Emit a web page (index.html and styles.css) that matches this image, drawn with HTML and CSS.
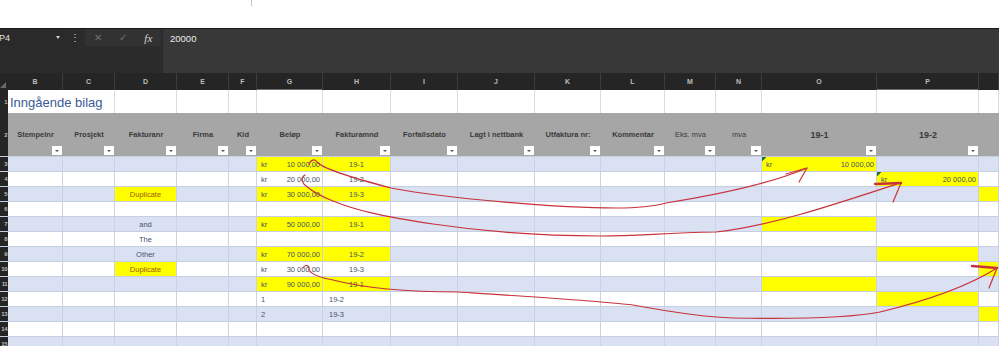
FILE: index.html
```html
<!DOCTYPE html>
<html lang="nb">
<head>
    <meta charset="UTF-8">
    <title>Inngående bilag</title>
    <link rel="stylesheet" href="styles.css">
</head>
<body>
<div class="page">
    <div class="topgap"><span class="tick"></span></div>

    <div class="fbar">
        <div class="fleft">
            <div class="ftools">
                <div class="namebox"><span>P4</span><span class="caret"></span></div>
                <div class="dots">&#8942;</div>
                <div class="fbtns">
                    <span class="fb x">&#10005;</span>
                    <span class="fb ok">&#10003;</span>
                    <span class="fb fx">fx</span>
                </div>
            </div>
        </div>
        <div class="formula">20000</div>
    </div>

    <div class="colheads">
        <div class="corner"><span class="corner-tri"></span></div>
        <div>B</div><div>C</div><div>D</div><div>E</div><div>F</div><div class="sel">G</div>
        <div>H</div><div>I</div><div>J</div><div>K</div><div>L</div><div>M</div><div>N</div>
        <div>O</div><div class="sel">P</div><div></div>
    </div>

    <div class="sheet">
        <div class="row title">
            <div class="rh">1</div>
            <div class="c ttl">Inngående bilag</div>
            <div class="c"></div><div class="c"></div><div class="c"></div><div class="c"></div><div class="c"></div>
            <div class="c"></div><div class="c"></div><div class="c"></div><div class="c"></div><div class="c"></div>
            <div class="c"></div><div class="c"></div><div class="c"></div><div class="c"></div>
        </div>

        <div class="row head">
            <div class="rh">2</div>
            <div class="h"><span>Stempelnr</span><i class="flt"></i></div>
            <div class="h"><span>Prosjekt</span><i class="flt"></i></div>
            <div class="h"><span>Fakturanr</span><i class="flt"></i></div>
            <div class="h"><span>Firma</span><i class="flt"></i></div>
            <div class="h"><span>Kid</span><i class="flt"></i></div>
            <div class="h"><span>Beløp</span><i class="flt"></i></div>
            <div class="h"><span>Fakturamnd</span><i class="flt"></i></div>
            <div class="h"><span>Forfallsdato</span><i class="flt"></i></div>
            <div class="h"><span>Lagt i nettbank</span><i class="flt"></i></div>
            <div class="h"><span>Utfaktura nr:</span><i class="flt"></i></div>
            <div class="h"><span>Kommentar</span><i class="flt"></i></div>
            <div class="h thin"><span>Eks. mva</span><i class="flt"></i></div>
            <div class="h thin"><span>mva</span><i class="flt"></i></div>
            <div class="h big"><span>19-1</span><i class="flt"></i></div>
            <div class="h big"><span>19-2</span><i class="flt"></i></div>
            <div class="h"></div>
        </div>

        <div class="row blue">
            <div class="rh">3</div>
            <div class="c"></div><div class="c"></div><div class="c"></div><div class="c"></div><div class="c"></div>
            <div class="c y m"><span>kr</span><span>10 000,00</span></div>
            <div class="c y ctr">19-1</div>
            <div class="c"></div><div class="c"></div><div class="c"></div><div class="c"></div><div class="c"></div><div class="c"></div>
            <div class="c y m flag"><span>kr</span><span>10 000,00</span></div>
            <div class="c"></div><div class="c"></div>
        </div>

        <div class="row">
            <div class="rh">4</div>
            <div class="c"></div><div class="c"></div><div class="c"></div><div class="c"></div><div class="c"></div>
            <div class="c m"><span>kr</span><span>20 000,00</span></div>
            <div class="c ctr">19-2</div>
            <div class="c"></div><div class="c"></div><div class="c"></div><div class="c"></div><div class="c"></div><div class="c"></div>
            <div class="c"></div>
            <div class="c y m flag"><span>kr</span><span>20 000,00</span></div>
            <div class="c"></div>
        </div>

        <div class="row blue">
            <div class="rh">5</div>
            <div class="c"></div><div class="c"></div>
            <div class="c y ctr dup">Duplicate</div>
            <div class="c"></div><div class="c"></div>
            <div class="c y m"><span>kr</span><span>30 000,00</span></div>
            <div class="c y ctr">19-3</div>
            <div class="c"></div><div class="c"></div><div class="c"></div><div class="c"></div><div class="c"></div><div class="c"></div>
            <div class="c"></div><div class="c"></div>
            <div class="c y"></div>
        </div>

        <div class="row">
            <div class="rh">6</div>
            <div class="c"></div><div class="c"></div><div class="c"></div><div class="c"></div><div class="c"></div>
            <div class="c"></div><div class="c"></div><div class="c"></div><div class="c"></div><div class="c"></div>
            <div class="c"></div><div class="c"></div><div class="c"></div><div class="c"></div><div class="c"></div><div class="c"></div>
        </div>

        <div class="row blue">
            <div class="rh">7</div>
            <div class="c"></div><div class="c"></div>
            <div class="c ctr">and</div>
            <div class="c"></div><div class="c"></div>
            <div class="c y m"><span>kr</span><span>50 000,00</span></div>
            <div class="c y ctr">19-1</div>
            <div class="c"></div><div class="c"></div><div class="c"></div><div class="c"></div><div class="c"></div><div class="c"></div>
            <div class="c y"></div>
            <div class="c"></div><div class="c"></div>
        </div>

        <div class="row">
            <div class="rh">8</div>
            <div class="c"></div><div class="c"></div>
            <div class="c ctr">The</div>
            <div class="c"></div><div class="c"></div><div class="c"></div><div class="c"></div><div class="c"></div>
            <div class="c"></div><div class="c"></div><div class="c"></div><div class="c"></div><div class="c"></div>
            <div class="c"></div><div class="c"></div><div class="c"></div>
        </div>

        <div class="row blue">
            <div class="rh">9</div>
            <div class="c"></div><div class="c"></div>
            <div class="c ctr">Other</div>
            <div class="c"></div><div class="c"></div>
            <div class="c y m"><span>kr</span><span>70 000,00</span></div>
            <div class="c y ctr">19-2</div>
            <div class="c"></div><div class="c"></div><div class="c"></div><div class="c"></div><div class="c"></div><div class="c"></div>
            <div class="c"></div>
            <div class="c y"></div>
            <div class="c"></div>
        </div>

        <div class="row">
            <div class="rh">10</div>
            <div class="c"></div><div class="c"></div>
            <div class="c y ctr dup">Duplicate</div>
            <div class="c"></div><div class="c"></div>
            <div class="c m"><span>kr</span><span>30 000,00</span></div>
            <div class="c ctr">19-3</div>
            <div class="c"></div><div class="c"></div><div class="c"></div><div class="c"></div><div class="c"></div><div class="c"></div>
            <div class="c"></div><div class="c"></div>
            <div class="c y"></div>
        </div>

        <div class="row blue">
            <div class="rh">11</div>
            <div class="c"></div><div class="c"></div><div class="c"></div><div class="c"></div><div class="c"></div>
            <div class="c y m"><span>kr</span><span>90 000,00</span></div>
            <div class="c y ctr">19-1</div>
            <div class="c"></div><div class="c"></div><div class="c"></div><div class="c"></div><div class="c"></div><div class="c"></div>
            <div class="c y"></div>
            <div class="c"></div><div class="c"></div>
        </div>

        <div class="row">
            <div class="rh">12</div>
            <div class="c"></div><div class="c"></div><div class="c"></div><div class="c"></div><div class="c"></div>
            <div class="c l">1</div>
            <div class="c l">19-2</div>
            <div class="c"></div><div class="c"></div><div class="c"></div><div class="c"></div><div class="c"></div><div class="c"></div>
            <div class="c"></div>
            <div class="c y"></div>
            <div class="c"></div>
        </div>

        <div class="row blue">
            <div class="rh">13</div>
            <div class="c"></div><div class="c"></div><div class="c"></div><div class="c"></div><div class="c"></div>
            <div class="c l">2</div>
            <div class="c l">19-3</div>
            <div class="c"></div><div class="c"></div><div class="c"></div><div class="c"></div><div class="c"></div><div class="c"></div>
            <div class="c"></div><div class="c"></div>
            <div class="c y"></div>
        </div>

        <div class="row">
            <div class="rh">14</div>
            <div class="c"></div><div class="c"></div><div class="c"></div><div class="c"></div><div class="c"></div>
            <div class="c"></div><div class="c"></div><div class="c"></div><div class="c"></div><div class="c"></div>
            <div class="c"></div><div class="c"></div><div class="c"></div><div class="c"></div><div class="c"></div><div class="c"></div>
        </div>

        <div class="row blue">
            <div class="rh">15</div>
            <div class="c"></div><div class="c"></div><div class="c"></div><div class="c"></div><div class="c"></div>
            <div class="c"></div><div class="c"></div><div class="c"></div><div class="c"></div><div class="c"></div>
            <div class="c"></div><div class="c"></div><div class="c"></div><div class="c"></div><div class="c"></div><div class="c"></div>
        </div>
    </div>

    <!-- hand drawn arrows on top of the sheet -->
    <svg class="ink" width="999" height="346" viewBox="0 0 999 346">
        <g fill="none" stroke="#c8323c" stroke-width="1.2" stroke-linecap="round" stroke-linejoin="round">
            <path d="M309 165 C310 160 315 158 317 162 C322 168 345 176 391 188 C450 199 560 208 616 208 C640 208 655 206 666 203 C710 196 770 184 807 168"/>
            <path d="M786 174 L807 168 L799 182"/>
            <path d="M305 175 C300 178 302 183 306 186 C312 191 320 196 333 201 C355 210 380 216 433 224 C480 231 540 236 600 236 C640 236 660 233 716 232 C770 226 830 206 900 183"/>
            <path d="M901 183 L893 202"/>
            <path d="M875 184 L901 183" stroke-width="2.4"/>
            <path d="M303 268 C305 264 310 265 309 270 C312 275 322 278 333 280 C360 287 400 292 458 292 C520 296 600 301 633 305 C660 310 700 317 733 318 C790 319 850 318 880 312 C930 300 970 285 997 268"/>
            <path d="M997 268 L989 288"/>
            <path d="M972 266 L997 268" stroke-width="2.4"/>
        </g>
    </svg>
</div>
</body>
</html>
```

FILE: styles.css
```css
body {
    margin: 0;
    background-color: #ffffff;
    font-family: 'Liberation Sans', Arial, sans-serif;
}
.page {
    position: relative;
    width: 999px;
    height: 346px;
    overflow: hidden;
}
.topgap {
    height: 28px;
}
.tick {
    display: block;
    margin-left: 251px;
    width: 1px;
    height: 6px;
    background-color: #c4c4c4;
}

/* formula bar */
.fbar {
    display: grid;
    grid-template-columns: 163px 1fr;
    height: 44px;
    background-color: #2b2b2b;
    border-top: 1px solid #1a1a1a;
}
.ftools {
    display: flex;
    align-items: center;
    height: 17px;
}
.namebox {
    display: flex;
    align-items: center;
    justify-content: space-between;
    width: 65px;
    height: 17px;
    box-sizing: border-box;
    padding: 0 4px 0 0;
    margin-left: -1px;
    background-color: #2a2a2a;
    color: #e2e2e2;
    font-size: 9px;
}
.caret {
    width: 0;
    height: 0;
    border-left: 2.5px solid transparent;
    border-right: 2.5px solid transparent;
    border-top: 3px solid #d0d0d0;
}
.dots {
    width: 21px;
    text-align: center;
    color: #cfcfcf;
    font-size: 10px;
}
.fbtns {
    display: flex;
    align-items: center;
    justify-content: space-around;
    width: 76px;
    height: 17px;
    background-color: #323232;
}
.fb {
    color: #707070;
    font-size: 10px;
}
.fb.fx {
    color: #d8d8d8;
    font-family: 'Liberation Serif', serif;
    font-style: italic;
    font-size: 11px;
}
.formula {
    background-color: #383838;
    color: #ededed;
    font-size: 9.5px;
    padding: 4px 7px;
}

/* column letters */
.colheads,
.row {
    display: grid;
    grid-template-columns: 8px 55px 52px 62px 52px 28px 66px 68px 67px 77px 66px 64px 51px 46px 115px 102px 1fr;
}
.colheads {
    height: 17px;
    background-color: #252525;
    color: #bdbdbd;
    font-size: 7px;
    font-weight: bold;
}
.colheads div {
    display: flex;
    align-items: center;
    justify-content: center;
    border-right: 1px solid #3c3c3c;
}
.colheads .sel {
    box-shadow: inset 0 -1px 0 #6d6d6d;
}
.colheads .corner {
    justify-content: flex-start;
    align-items: flex-end;
    border-right: none;
}
.corner-tri {
    width: 0;
    height: 0;
    margin: 0 0 2px 0;
    border-left: 6px solid transparent;
    border-bottom: 6px solid #6a6a6a;
}

/* sheet */
.row {
    height: 15px;
    box-sizing: border-box;
    border-bottom: 1px solid #c6cfe1;
    background-color: #ffffff;
    color: #46536a;
    font-size: 7.5px;
}
.row.blue {
    background-color: #d9e1f2;
}
.rh {
    display: flex;
    align-items: center;
    justify-content: flex-end;
    padding-right: 1px;
    background-color: #252525;
    color: #bdbdbd;
    font-size: 6px;
    font-weight: bold;
    letter-spacing: -0.5px;
}
.c {
    display: flex;
    align-items: center;
    border-right: 1px solid #cbd3e2;
    white-space: nowrap;
}
.c.y {
    background-color: #ffff00;
}
.c.m {
    justify-content: space-between;
    padding: 0 2px 0 4px;
}
.c.ctr {
    justify-content: center;
}
.c.l {
    padding-left: 4px;
}
.c.l + .c.l {
    padding-left: 6px;
}
.c.dup {
    color: #9c5a00;
}
.c.flag {
    background-image: linear-gradient(135deg, #217346 3px, transparent 3px);
}

.row.title {
    height: 23px;
    border-bottom: none;
}
.title .c {
    border-right-color: #dcdcdc;
}
.c.ttl {
    grid-column: span 2;
    padding-left: 2px;
    align-items: flex-end;
    padding-bottom: 3px;
    color: #3b5a98;
    font-size: 13px;
}

.row.head {
    height: 44px;
    border-bottom: 1px solid #c6cfe1;
    background-color: #a6a6a6;
    color: #3a3a3a;
    font-size: 7.5px;
    font-weight: bold;
}
.head .rh {
    color: #bdbdbd;
}
.h {
    display: grid;
}
.h span,
.h .flt {
    grid-area: 1 / 1;
}
.h span {
    align-self: center;
    justify-self: center;
    white-space: nowrap;
}
.h.thin span {
    font-weight: normal;
}
.h.big span {
    font-size: 9px;
}
.flt {
    align-self: end;
    justify-self: end;
    display: flex;
    align-items: center;
    justify-content: center;
    width: 10px;
    height: 9px;
    margin: 0 1px 1px 0;
    background-color: #ffffff;
}
.flt::after {
    content: "";
    border-left: 2px solid transparent;
    border-right: 2px solid transparent;
    border-top: 2.5px solid #555555;
}

.ink {
    position: absolute;
    top: 0;
    left: 0;
    pointer-events: none;
}
```
